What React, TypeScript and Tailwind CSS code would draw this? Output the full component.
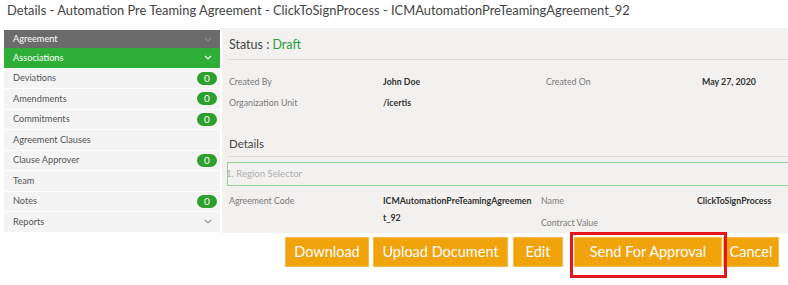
import React from 'react';

const font = { fontFamily: 'Lato, "Open Sans", sans-serif' };

type Item = { label: string; count?: number; chevron?: boolean };

const items: Item[] = [
  { label: 'Deviations', count: 0 },
  { label: 'Amendments', count: 0 },
  { label: 'Commitments', count: 0 },
  { label: 'Agreement Clauses' },
  { label: 'Clause Approver', count: 0 },
  { label: 'Team' },
  { label: 'Notes', count: 0 },
  { label: 'Reports', chevron: true },
];

const Chevron = ({ className }: { className: string }) => (
  <svg width="8" height="5" viewBox="0 0 8 5" className={className}>
    <path d="M1 1l3 3 3-3" fill="none" stroke="currentColor" strokeWidth="1.2" />
  </svg>
);

const Sidebar = () => (
  <aside className="w-[216px] shrink-0 mt-[2px] text-[9.2px]">
    <div className="h-[18px] bg-[#6b6b6b] text-white flex items-center justify-between pl-[9px] pr-[8px]">
      <span>Agreement</span>
      <Chevron className="text-[#8a8a8a]" />
    </div>
    <div className="h-[20.5px] bg-[#2fae37] text-white flex items-center justify-between pl-[9px] pr-[8px] border-b border-white">
      <span>Associations</span>
      <Chevron className="text-white" />
    </div>
    {items.map((it) => (
      <div
        key={it.label}
        className="h-[20.5px] bg-[#f4f4f4] text-[#555] flex items-center justify-between pl-[9px] pr-[3px] border-b border-white"
      >
        <span>{it.label}</span>
        {it.count !== undefined && (
          <span className="h-[13px] w-[20px] rounded-full bg-[#2ca02c] text-white text-[10px] leading-[13px] text-center">
            {it.count}
          </span>
        )}
        {it.chevron && <Chevron className="text-[#999] mr-[5px]" />}
      </div>
    ))}
  </aside>
);

export default function App() {
  return (
    <div className="w-[788px] h-[285px] bg-white overflow-hidden relative" style={font}>
      <h1 className="text-[12.9px] text-[#444] pl-[7px] h-[28px] leading-[20px]">
        Details - Automation Pre Teaming Agreement - ClickToSignProcess - ICMAutomationPreTeamingAgreement_92
      </h1>
      <div className="flex pl-[4px]">
        <Sidebar />
        <main className="flex-1 ml-[2px] bg-[#f2f1f0] h-[205px] text-[8.8px] pl-[6px] overflow-hidden">
          <div className="h-[32px] flex items-end pb-[4px] border-b border-[#dcdcdc] text-[12.5px] text-[#444] pl-[1px]">
            Status :&nbsp;<span className="text-[#2e9a3e]">Draft</span>
          </div>
          <div className="pl-[1px] pt-[14px] flex flex-col gap-[6px]">
            <div className="flex h-[15px] items-center">
              <div className="text-[#7a7a7a] w-[154px] shrink-0">Created By</div>
              <div className="text-[#333] font-bold w-[163px] shrink-0">John Doe</div>
              <div className="text-[#7a7a7a] w-[156px] shrink-0">Created On</div>
              <div className="text-[#333] font-bold">May 27, 2020</div>
            </div>
            <div className="flex h-[15px] items-center">
              <div className="text-[#7a7a7a] w-[154px] shrink-0">Organization Unit</div>
              <div className="text-[#333] font-bold">/icertis</div>
            </div>
          </div>
          <div className="mt-[19px] h-[28px] flex items-center border-b border-[#dcdcdc] text-[11.5px] text-[#444] pl-[1px] pt-[2px]">
            Details
          </div>
          <div className="mt-[5px] h-[24px] border-[1.5px] border-r-0 border-[#8fd396] flex items-center text-[#b0b0b0] text-[9.6px] -ml-[1px]">
            <span className="-ml-[2px]">1. Region Selector</span>
          </div>
          <div className="flex pl-[1px] pt-[6px] leading-[17px]">
            <div className="text-[#7a7a7a] w-[154px] shrink-0">Agreement Code</div>
            <div className="text-[#333] font-bold w-[158px] shrink-0 whitespace-nowrap">
              ICMAutomationPreTeamingAgreemen
              <br />
              t_92
            </div>
            <div className="text-[#7a7a7a] w-[156px] shrink-0 flex flex-col gap-[5px]">
              <div>Name</div>
              <div>Contract Value</div>
            </div>
            <div className="text-[#333] font-bold">ClickToSignProcess</div>
          </div>
        </main>
      </div>
      <div className="flex justify-end pr-[9px] mt-[4px] text-[14.5px] text-white">
        <button className="h-[30px] w-[84px] bg-[#f0a30a] border border-[#f5bb4a]">Download</button>
        <button className="h-[30px] w-[135px] ml-[4px] bg-[#f0a30a] border border-[#f5bb4a]">Upload Document</button>
        <button className="h-[30px] w-[50px] ml-[5px] bg-[#f0a30a] border border-[#f5bb4a]">Edit</button>
        <button className="h-[30px] w-[148px] ml-[11px] bg-[#f0a30a] border border-[#f5bb4a]">Send For Approval</button>
        <button className="h-[30px] w-[56px] ml-[1px] bg-[#f0a30a] border border-[#f5bb4a]">Cancel</button>
      </div>
      <div className="absolute left-[570px] top-[232px] w-[157px] h-[46px] border-[3px] border-[#e8141b] pointer-events-none" />
    </div>
  );
}
